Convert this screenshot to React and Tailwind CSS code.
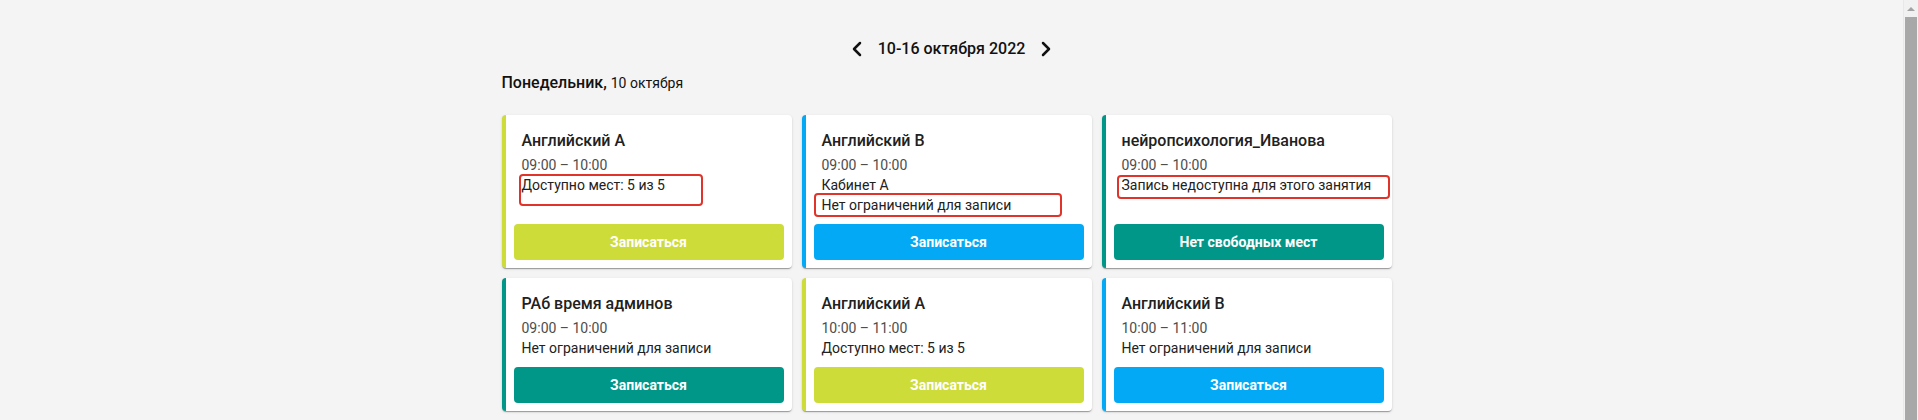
import { ChevronLeft, ChevronRight } from "lucide-react";

const lessons = [
  {
    title: "Английский А",
    time: "09:00 – 10:00",
    lines: ["Доступно мест: 5 из 5"],
    button: "Записаться",
    color: "lime",
    mark: "left-[13px] top-[59px] w-[184px] h-[32px]",
  },
  {
    title: "Английский B",
    time: "09:00 – 10:00",
    lines: ["Кабинет А", "Нет ограничений для записи"],
    button: "Записаться",
    color: "blue",
    mark: "left-[8px] top-[78px] w-[248px] h-[24px]",
  },
  {
    title: "нейропсихология_Иванова",
    time: "09:00 – 10:00",
    lines: ["Запись недоступна для этого занятия"],
    button: "Нет свободных мест",
    color: "teal",
    mark: "left-[11px] top-[60px] w-[273px] h-[24px]",
  },
  {
    title: "РАб время админов",
    time: "09:00 – 10:00",
    lines: ["Нет ограничений для записи"],
    button: "Записаться",
    color: "teal",
  },
  {
    title: "Английский А",
    time: "10:00 – 11:00",
    lines: ["Доступно мест: 5 из 5"],
    button: "Записаться",
    color: "lime",
  },
  {
    title: "Английский B",
    time: "10:00 – 11:00",
    lines: ["Нет ограничений для записи"],
    button: "Записаться",
    color: "blue",
  },
];

const borderColors = {
  lime: "border-[#cddc39]",
  blue: "border-[#03a9f4]",
  teal: "border-[#009688]",
};

const buttonColors = {
  lime: "bg-[#cddc39]",
  blue: "bg-[#03a9f4]",
  teal: "bg-[#009688]",
};

function LessonCard({ lesson }) {
  return (
    <div
      className={`relative flex flex-col bg-white rounded border-l-4 ${borderColors[lesson.color]} shadow-[0_2px_1px_-1px_rgba(0,0,0,0.2),0_1px_1px_0_rgba(0,0,0,0.14),0_1px_3px_0_rgba(0,0,0,0.12)]`}
    >
      <div className="pl-4 pr-3 pt-[14px]">
        <div className="text-[16px] leading-6 font-medium text-[#212121]">
          {lesson.title}
        </div>
        <div className="mt-0.5 text-[14px] leading-5 text-[#4d4d4d]">
          {lesson.time}
        </div>
        {lesson.lines.map((line) => (
          <div key={line} className="text-[14px] leading-5 text-[#212121]">
            {line}
          </div>
        ))}
      </div>
      <div className="mt-auto px-2 pt-[9px] pb-2">
        <button
          className={`w-full h-9 rounded ${buttonColors[lesson.color]} text-white text-[14px] font-bold`}
        >
          {lesson.button}
        </button>
      </div>

      {/* red annotation frame from the screenshot */}
      {lesson.mark && (
        <div
          className={`absolute ${lesson.mark} border-2 border-[#e0342a] rounded`}
        />
      )}
    </div>
  );
}

export default function App() {
  return (
    <div
      className="flex h-[420px] overflow-hidden bg-[#f4f4f4]"
      style={{ fontFamily: "Roboto, 'Noto Sans', sans-serif" }}
    >
      <div className="flex-1 pt-[37px]">
        {/* WEEK SWITCHER */}
        <div className="flex items-center justify-center gap-[9px] h-6 text-[#111]">
          <ChevronLeft size={24} strokeWidth={2.5} />
          <span className="text-[16px] leading-6 font-medium">
            10-16 октября 2022
          </span>
          <ChevronRight size={24} strokeWidth={2.5} />
        </div>

        <div className="w-[900px] mx-auto">
          {/* DAY */}
          <div className="mt-[10px] leading-6 text-[#111]">
            <span className="text-[16px] font-medium">Понедельник,</span>{" "}
            <span className="text-[14px]">10 октября</span>
          </div>

          <div className="mt-5 grid grid-cols-[290px_290px_290px] gap-[10px]">
            {lessons.map((lesson, i) => (
              <LessonCard key={i} lesson={lesson} />
            ))}
          </div>
        </div>
      </div>

      {/* SCROLLBAR */}
      <div className="w-[15px] flex flex-col bg-[#f1f1f1] border-l border-[#e8e8e8]">
        <div className="h-[17px] flex items-center justify-center">
          <div className="w-0 h-0 border-l-[4px] border-r-[4px] border-b-[4px] border-l-transparent border-r-transparent border-b-[#a3a3a3]" />
        </div>
        <div className="flex-1 mx-px bg-[#a8a8a8]" />
      </div>
    </div>
  );
}
